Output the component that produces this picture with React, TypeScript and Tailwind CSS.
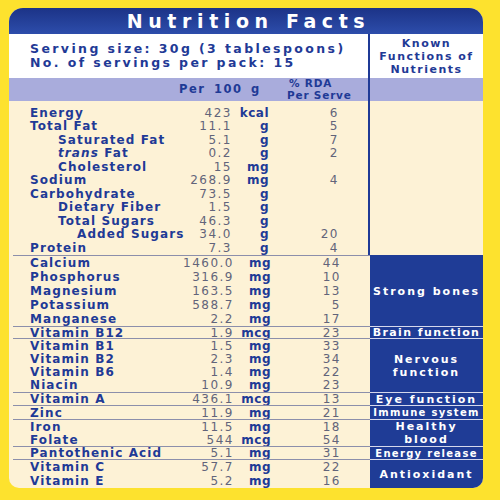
import React from "react";

type Row = { name: React.ReactNode; indent?: number; value: string; unit: string; rda: string };

const topRows: Row[] = [
  { name: "Energy", value: "423", unit: "kcal", rda: "6" },
  { name: "Total Fat", value: "11.1", unit: "g", rda: "5" },
  { name: "Saturated Fat", indent: 1, value: "5.1", unit: "g", rda: "7" },
  { name: <><i>trans</i> Fat</>, indent: 1, value: "0.2", unit: "g", rda: "2" },
  { name: "Cholesterol", indent: 1, value: "15", unit: "mg", rda: "" },
  { name: "Sodium", value: "268.9", unit: "mg", rda: "4" },
  { name: "Carbohydrate", value: "73.5", unit: "g", rda: "" },
  { name: "Dietary Fiber", indent: 1, value: "1.5", unit: "g", rda: "" },
  { name: "Total Sugars", indent: 1, value: "46.3", unit: "g", rda: "" },
  { name: "Added Sugars", indent: 2, value: "34.0", unit: "g", rda: "20" },
  { name: "Protein", value: "7.3", unit: "g", rda: "4" },
];

type Group = { rows: Row[]; label: string[]; h: string; small?: boolean };

const groups: Group[] = [
  {
    h: "h-[71px]",
    label: ["Strong bones"],
    rows: [
      { name: "Calcium", value: "1460.0", unit: "mg", rda: "44" },
      { name: "Phosphorus", value: "316.9", unit: "mg", rda: "10" },
      { name: "Magnesium", value: "163.5", unit: "mg", rda: "13" },
      { name: "Potassium", value: "588.7", unit: "mg", rda: "5" },
      { name: "Manganese", value: "2.2", unit: "mg", rda: "17" },
    ],
  },
  { h: "h-[12px]", label: ["Brain function"], rows: [{ name: "Vitamin B12", value: "1.9", unit: "mcg", rda: "23" }] },
  {
    h: "h-[54px]",
    label: ["Nervous", "function"],
    rows: [
      { name: "Vitamin B1", value: "1.5", unit: "mg", rda: "33" },
      { name: "Vitamin B2", value: "2.3", unit: "mg", rda: "34" },
      { name: "Vitamin B6", value: "1.4", unit: "mg", rda: "22" },
      { name: "Niacin", value: "10.9", unit: "mg", rda: "23" },
    ],
  },
  { h: "h-[13px]", label: ["Eye function"], rows: [{ name: "Vitamin A", value: "436.1", unit: "mcg", rda: "13" }] },
  { h: "h-[14px]", label: ["Immune system"], small: true, rows: [{ name: "Zinc", value: "11.9", unit: "mg", rda: "21" }] },
  {
    h: "h-[27px]",
    label: ["Healthy", "blood"],
    rows: [
      { name: "Iron", value: "11.5", unit: "mg", rda: "18" },
      { name: "Folate", value: "544", unit: "mcg", rda: "54" },
    ],
  },
  { h: "h-[13px]", label: ["Energy release"], small: true, rows: [{ name: "Pantothenic Acid", value: "5.1", unit: "mg", rda: "31" }] },
  {
    h: "h-[29px]",
    label: ["Antioxidant"],
    rows: [
      { name: "Vitamin C", value: "57.7", unit: "mg", rda: "22" },
      { name: "Vitamin E", value: "5.2", unit: "mg", rda: "16" },
    ],
  },
];

const indentPad = ["pl-[21px]", "pl-[49px]", "pl-[68px]"];
const indentPadInset = ["pl-[17px]", "pl-[45px]", "pl-[64px]"];

function NutrientRow({ row, inset }: { row: Row; inset?: boolean }) {
  const pads = inset ? indentPadInset : indentPad;
  return (
    <div className="flex min-w-0 flex-1 items-center text-[12px] leading-none">
      <span className={`min-w-0 flex-1 whitespace-nowrap font-bold tracking-[1.1px] text-[#1f3a96] ${pads[row.indent ?? 0]}`}>
        {row.name}
      </span>
      <span className="w-[60px] shrink-0 text-right tracking-[1.5px] text-[#62647a]">{row.value}</span>
      <span className="w-[37px] shrink-0 text-right font-bold tracking-[0.5px] text-[#1f3a96]">{row.unit}</span>
      <span className="w-[70px] shrink-0 text-right tracking-[1.5px] text-[#62647a]">{row.rda}</span>
      <span className="w-[29px] shrink-0" />
    </div>
  );
}

export default function App() {
  return (
    <div className="h-[500px] w-[500px] bg-[#fde22e] pl-[9px] pt-[8px] font-['DejaVu_Sans',sans-serif] text-[11px]">
      <div className="flex h-[480px] w-[474px] flex-col overflow-hidden rounded-t-[14px] rounded-b-[10px] bg-[#fdf2d6]">
        <div className="flex h-[26px] items-center justify-center bg-gradient-to-b from-[#1c3387] to-[#2d4dab]">
          <h1 className="pl-[5px] text-[19px] font-bold tracking-[5.6px] text-white">Nutrition Facts</h1>
        </div>

        <div className="flex h-[221px]">
          <div className="flex w-[359px] flex-col">
            <div className="flex h-[44px] flex-col justify-center bg-white pl-[21px] text-[12.5px] font-bold leading-[14px] tracking-[2.4px] text-[#1f3a96]">
              <p>Serving size: 30g (3 tablespoons)</p>
              <p>No. of servings per pack: 15</p>
            </div>
            <div className="flex h-[23px] items-center bg-[#a9acdc] font-bold text-[#1f3a96]">
              <span className="w-[170px]" />
              <span className="w-[72px] whitespace-nowrap text-right text-[11.5px] tracking-[1.5px] [word-spacing:3px]">Per 100 g</span>
              <span className="ml-[36px] flex flex-col text-[10.5px] leading-[11.5px] tracking-[0.8px]">
                <span className="pl-[2px]">% RDA</span>
                <span className="whitespace-nowrap">Per Serve</span>
              </span>
            </div>
            <div className="flex flex-1 flex-col pt-[5px]">
              {topRows.map((r, i) => (
                <div key={i} className="flex h-[13.5px]">
                  <NutrientRow row={r} />
                </div>
              ))}
            </div>
          </div>
          <div className="flex w-[115px] flex-col border-l-2 border-[#1f3a96]">
            <div className="flex h-[44px] flex-col items-center justify-center bg-white text-center font-bold leading-[13px] tracking-[1.5px] text-[#1f3a96]">
              <span>Known</span>
              <span className="whitespace-nowrap">Functions of</span>
              <span>Nutrients</span>
            </div>
            <div className="h-[23px] bg-[#a9acdc]" />
            <div className="flex-1" />
          </div>
        </div>

        {groups.map((g, gi) => (
          <div key={gi} className={`flex ${g.h}`}>
            <div className="w-[361px] pl-[4px]">
              <div className="flex h-full flex-col border-t border-[#8c8fab]">
                {g.rows.map((r, i) => (
                  <NutrientRow key={i} row={r} inset />
                ))}
              </div>
            </div>
            <div
              className={`flex w-[113px] flex-col items-center justify-center bg-[#1f3c96] text-center font-bold leading-[13px] text-white ${
                gi === 0 ? "border-t border-[#1f3c96]" : "border-t border-[#d5d8ec]"
              } ${g.small ? "text-[10px] tracking-[1.3px]" : gi === 1 ? "text-[11px] tracking-[1.4px]" : "text-[11px] tracking-[2px]"}`}
            >
              {g.label.map((l, i) => (
                <span key={i} className="whitespace-nowrap">
                  {l}
                </span>
              ))}
            </div>
          </div>
        ))}
      </div>
    </div>
  );
}
